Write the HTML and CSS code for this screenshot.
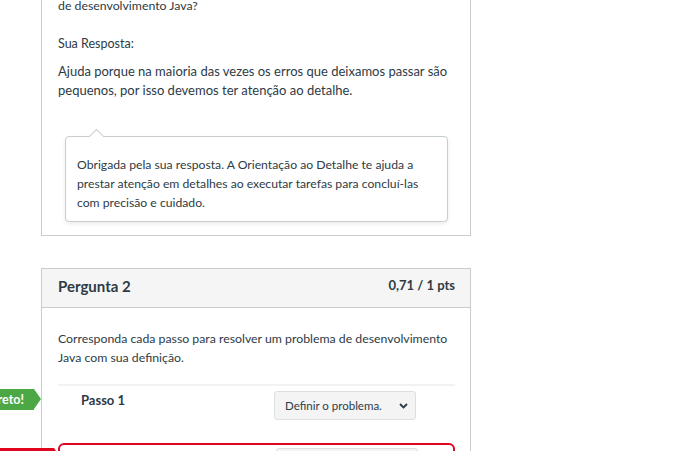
FILE: index.html
```html
<!DOCTYPE html>
<html lang="pt">
<head>
<meta charset="utf-8">
<title>Quiz</title>
<link rel="stylesheet" href="styles.css">
</head>
<body>
<div class="page">
  <section class="card card-cut">
    <div class="card-body">
      <p class="question first">de desenvolvimento Java?</p>
      <p class="label">Sua Resposta:</p>
      <p class="answer">Ajuda porque na maioria das vezes os erros que deixamos passar são pequenos, por isso devemos ter atenção ao detalhe.</p>
      <div class="popover">
        <p>Obrigada pela sua resposta. A Orientação ao Detalhe te ajuda a prestar atenção em detalhes ao executar tarefas para concluí-las com precisão e cuidado.</p>
      </div>
    </div>
  </section>

  <section class="card">
    <header class="card-header">
      <h3 class="title">Pergunta 2</h3>
      <span class="pts">0,71 / 1 pts</span>
    </header>
    <div class="card-body">
      <p class="question">Corresponda cada passo para resolver um problema de desenvolvimento Java com sua definição.</p>
      <div class="match-row">
        <span class="tag tag-green">Correto!</span>
        <div class="prompt">Passo 1</div>
        <div class="select">
          <span>Definir o problema.</span>
          <svg class="chev" width="9" height="6" viewBox="0 0 9 6"><path d="M1 1l3.5 3.5L8 1" fill="none" stroke="#2d3b45" stroke-width="1.8"/></svg>
        </div>
      </div>
      <div class="match-row wrong">
        <span class="tag tag-red">Você respondeu</span>
        <div class="prompt">Passo 2</div>
        <div class="select">
          <span>Planejar a solução.</span>
          <svg class="chev" width="9" height="6" viewBox="0 0 9 6"><path d="M1 1l3.5 3.5L8 1" fill="none" stroke="#2d3b45" stroke-width="1.8"/></svg>
        </div>
      </div>
    </div>
  </section>
</div>
</body>
</html>
```

FILE: styles.css
```css
html, body {
  margin: 0;
  padding: 0;
  background: #fff;
}
body {
  font-family: Lato, "Noto Sans", sans-serif;
  color: #2d3b45;
  font-size: 13px;
  line-height: 19px;
  height: 451px;
  overflow: hidden;
}
p { margin: 0; }
.page {
  padding-left: 41px;
  width: 430px;
}
.card {
  border: 1px solid #c7cdd1;
  margin-bottom: 32px;
  position: relative;
}
.card-cut {
  border-top: none;
  margin-top: -4px;
}
.card-body {
  padding: 0 15px 13px 16px;
}
.question {
  font-size: 12.3px;
}
.label {
  margin-top: 19px;
  font-size: 12.5px;
}
.answer {
  margin-top: 9px;
}
.popover {
  position: relative;
  margin: 36px 7px 0 7px;
  border: 1px solid #c7cdd1;
  border-radius: 4px;
  box-shadow: 0 2px 4px rgba(0,0,0,0.08);
  padding: 18px 11px 9px 11px;
  background: #fff;
  font-size: 12.2px;
}
.popover::before {
  content: "";
  position: absolute;
  top: -6px;
  left: 25px;
  width: 10px;
  height: 10px;
  background: #fff;
  border-left: 1px solid #c7cdd1;
  border-top: 1px solid #c7cdd1;
  transform: rotate(45deg);
}
.card-header {
  display: flex;
  justify-content: space-between;
  align-items: center;
  background: #f5f5f5;
  border-bottom: 1px solid #c7cdd1;
  padding: 0 15px 0 16px;
  height: 38px;
}
.title {
  margin: 0;
  font-size: 15px;
  font-weight: 700;
  margin-top: -3px;
}
.pts {
  font-size: 13px;
  font-weight: 700;
  margin-top: -5px;
}
.card .card-body .question:not(.first) {
  margin-top: 21px;
}
.match-row {
  position: relative;
  display: flex;
  align-items: flex-start;
  border-top: 2px solid #f2f2f2;
  margin-top: 17px;
  padding: 5px 0 23px 23px;
}
.prompt {
  width: 193px;
  font-weight: 700;
}
.select {
  display: flex;
  align-items: center;
  justify-content: space-between;
  width: 142px;
  height: 29px;
  box-sizing: border-box;
  padding: 0 7px 0 10px;
  background: #f4f4f5;
  border: 1px solid #dcdee0;
  border-radius: 3px;
  font-size: 11.5px;
}
.chev { display: block; }
.match-row.wrong {
  border: 2px solid #e0061f;
  border-radius: 6px;
  margin-top: 0;
  padding-top: 3px;
}
.tag {
  position: absolute;
  color: #fff;
  font-size: 12.5px;
  font-weight: 700;
  line-height: 21px;
  height: 21px;
  padding: 0 10px 0 8px;
  white-space: nowrap;
}
.tag::after {
  content: "";
  position: absolute;
  right: -7px;
  top: 0;
  border-style: solid;
  border-width: 10.5px 0 10.5px 7px;
  border-color: transparent;
}
.tag-green {
  right: 100%;
  margin-right: 24px;
  top: 3px;
  background: #4ca845;
}
.tag-green::after { border-left-color: #4ca845; }
.tag-red {
  right: 100%;
  margin-right: 6px;
  top: 3px;
  background: #e0061f;
}
.tag-red::after { border-left-color: #e0061f; }
```
